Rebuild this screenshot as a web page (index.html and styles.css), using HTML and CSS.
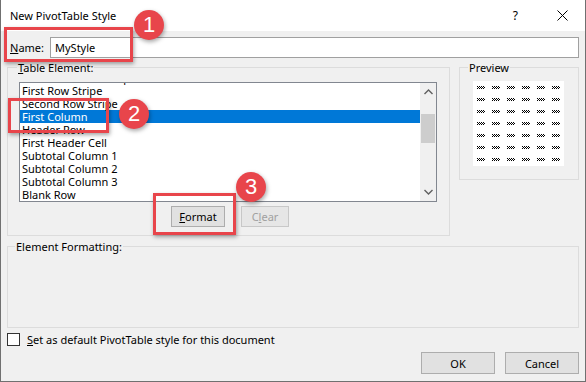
FILE: index.html
```html
<!DOCTYPE html>
<html>
<head>
<meta charset="utf-8">
<link rel="stylesheet" href="styles.css">
</head>
<body>
<div class="dialog">
  <div class="titlebar">
    <span class="title">New PivotTable Style</span>
    <span class="help">?</span>
    <span class="close"><svg width="11" height="11" viewBox="0 0 11 11"><path d="M0.5 0.5L10.5 10.5M10.5 0.5L0.5 10.5" stroke="#000" stroke-width="1"/></svg></span>
  </div>
  <div class="content">
    <div class="name-row">
      <span class="name-label"><u>N</u>ame:</span>
      <div class="textbox">MyStyle</div>
    </div>
    <div class="main-row">
      <div class="group table-group">
        <span class="group-label"><u>T</u>able Element:</span>
        <div class="listbox">
          <div class="items">
            <div class="item">Second Column Stripe</div>
            <div class="item">First Row Stripe</div>
            <div class="item">Second Row Stripe</div>
            <div class="item selected">First Column</div>
            <div class="item">Header Row</div>
            <div class="item">First Header Cell</div>
            <div class="item">Subtotal Column 1</div>
            <div class="item">Subtotal Column 2</div>
            <div class="item">Subtotal Column 3</div>
            <div class="item">Blank Row</div>
          </div>
          <div class="scrollbar">
            <svg class="arrow" width="9" height="6" viewBox="0 0 9 6"><path d="M0.5 5L4.5 1L8.5 5" fill="none" stroke="#606060" stroke-width="1.4"/></svg>
            <div class="track"><div class="thumb"></div></div>
            <svg class="arrow" width="9" height="6" viewBox="0 0 9 6"><path d="M0.5 1L4.5 5L8.5 1" fill="none" stroke="#606060" stroke-width="1.4"/></svg>
          </div>
        </div>
        <div class="btn-row">
          <button class="btn format"><u>F</u>ormat</button>
          <button class="btn clear" disabled>C<u>l</u>ear</button>
        </div>
      </div>
      <div class="group preview-group">
        <span class="group-label">Preview</span>
        <svg class="preview" width="91" height="85" viewBox="0 0 91 85" shape-rendering="crispEdges">
          <defs>
            <pattern id="mark" x="4" y="5" width="15" height="12" patternUnits="userSpaceOnUse">
              <rect x="0" y="0" width="1" height="1"/><rect x="2" y="0" width="1" height="1"/><rect x="4" y="0" width="1" height="1"/><rect x="6" y="0" width="1" height="1"/>
              <rect x="1" y="1" width="1" height="1"/><rect x="3" y="1" width="1" height="1"/><rect x="5" y="1" width="1" height="1"/><rect x="7" y="1" width="1" height="1"/>
              <rect x="0" y="2" width="1" height="1"/><rect x="2" y="2" width="1" height="1"/><rect x="4" y="2" width="1" height="1"/><rect x="6" y="2" width="1" height="1"/>
            </pattern>
          </defs>
          <rect x="0" y="0" width="91" height="85" fill="#fff"/>
          <rect x="4" y="5" width="83" height="75" fill="url(#mark)"/>
        </svg>
      </div>
    </div>
    <div class="group format-group">
      <span class="group-label">Element Formatting:</span>
    </div>
    <div class="check-row">
      <span class="checkbox"></span>
      <span class="check-label"><u>S</u>et as default PivotTable style for this document</span>
    </div>
    <div class="footer">
      <button class="btn dlg">OK</button>
      <button class="btn dlg">Cancel</button>
    </div>
  </div>

  <div class="anno-box box1"></div>
  <div class="anno-box box2"></div>
  <div class="anno-box box3"></div>
  <div class="badge badge1">1</div>
  <div class="badge badge2">2</div>
  <div class="badge badge3">3</div>
</div>
</body>
</html>
```
FILE: styles.css
```css
* { box-sizing: border-box; }
body {
  margin: 0;
  font-family: "Noto Sans", "Open Sans", sans-serif;
  font-size: 11px;
  color: #000;
}
u { text-decoration: underline; text-underline-offset: 1px; }

.dialog {
  width: 586px;
  height: 382px;
  border: 1px solid #707070;
  border-top: none;
  background: #f0f0f0;
  position: relative;
  display: flex;
  flex-direction: column;
}

.titlebar {
  height: 31px;
  background: #fff;
  display: flex;
  align-items: center;
  padding-left: 9px;
  flex: none;
}
.title { font-size: 11px; flex: 1; }
.help { font-size: 12px; margin-right: 39px; }
.close { width: 11px; height: 11px; margin-right: 17px; display: flex; }

.content {
  padding: 6px 6px 0 6px;
  display: flex;
  flex-direction: column;
}

.name-row { display: flex; align-items: center; height: 21px; }
.name-label { width: 43px; padding-left: 3px; flex: none; }
.textbox {
  flex: 1;
  height: 21px;
  border: 1px solid #a0a0a0;
  background: #fff;
  padding-left: 4px;
  line-height: 19px;
}

.main-row { display: flex; gap: 9px; margin-top: 9px; align-items: flex-start; }

.group { border: 1px solid #dcdcdc; }
.group-label {
  display: table;
  background: #f0f0f0;
  line-height: 15px;
  height: 15px;
  margin-top: -8px;
  padding: 0 1px;
}

.table-group { width: 443px; height: 169px; padding: 0 12px 0 11px; }
.table-group .group-label { margin-left: -2px; }

.listbox {
  margin-top: 7px;
  height: 120px;
  border: 1px solid #828790;
  background: #fff;
  display: flex;
  overflow: hidden;
}
.items { flex: 1; margin-top: -12px; }
.item { height: 13px; line-height: 14px; padding-left: 2px; white-space: nowrap; }
.item.selected { background: #0078d7; color: #fff; }

.scrollbar {
  width: 16px;
  background: #f0f0f0;
  display: flex;
  flex-direction: column;
  align-items: center;
}
.arrow { flex: none; margin: 6px 0; }
.track { flex: 1; width: 100%; padding: 13px 1px 0 1px; }
.thumb { height: 29px; background: #cdcdcd; }

.btn-row { display: flex; justify-content: center; gap: 16px; margin-top: 4px; padding-left: 4px; }
.btn {
  font-family: inherit;
  font-size: 11px;
  height: 21px;
  border: 1px solid #adadad;
  background: #e1e1e1;
  color: #000;
  padding: 0;
  line-height: 19px;
}
.format { width: 54px; }
.clear { width: 48px; color: #a0a0a0; background: #e6e6e6; border-color: #c8c8c8; }

.preview-group { width: 120px; height: 113px; padding: 0 0 0 13px; }
.preview-group .group-label { margin-left: -5px; }
.preview { display: block; margin-top: 6px; }

.format-group { margin-top: 10px; height: 82px; padding-left: 7px; }

.check-row { display: flex; align-items: center; margin-top: 5px; height: 13px; }
.checkbox { width: 13px; height: 13px; border: 1px solid #333; background: #fff; flex: none; }
.check-label { margin-left: 7px; }

.footer { display: flex; justify-content: flex-end; gap: 10px; margin-top: 6px; }
.dlg { width: 74px; height: 22px; }

.anno-box {
  position: absolute;
  border: 3px solid #e8454b;
  box-shadow: 1px 2px 4px rgba(0,0,0,0.35);
}
.box1 { left: 3px; top: 27px; width: 129px; height: 35px; }
.box2 { left: 7px; top: 98px; width: 101px; height: 35px; }
.box3 { left: 152px; top: 193px; width: 83px; height: 42px; }

.badge {
  position: absolute;
  width: 30px;
  height: 30px;
  border-radius: 50%;
  background: #e8454b;
  color: #fff;
  font-family: "Liberation Sans", Arial, sans-serif;
  font-size: 22px;
  line-height: 30px;
  text-align: center;
  box-shadow: 1px 2px 4px rgba(0,0,0,0.35);
}
.badge1 { left: 133px; top: 10px; }
.badge2 { left: 118px; top: 99px; }
.badge3 { left: 235px; top: 172px; }
```
